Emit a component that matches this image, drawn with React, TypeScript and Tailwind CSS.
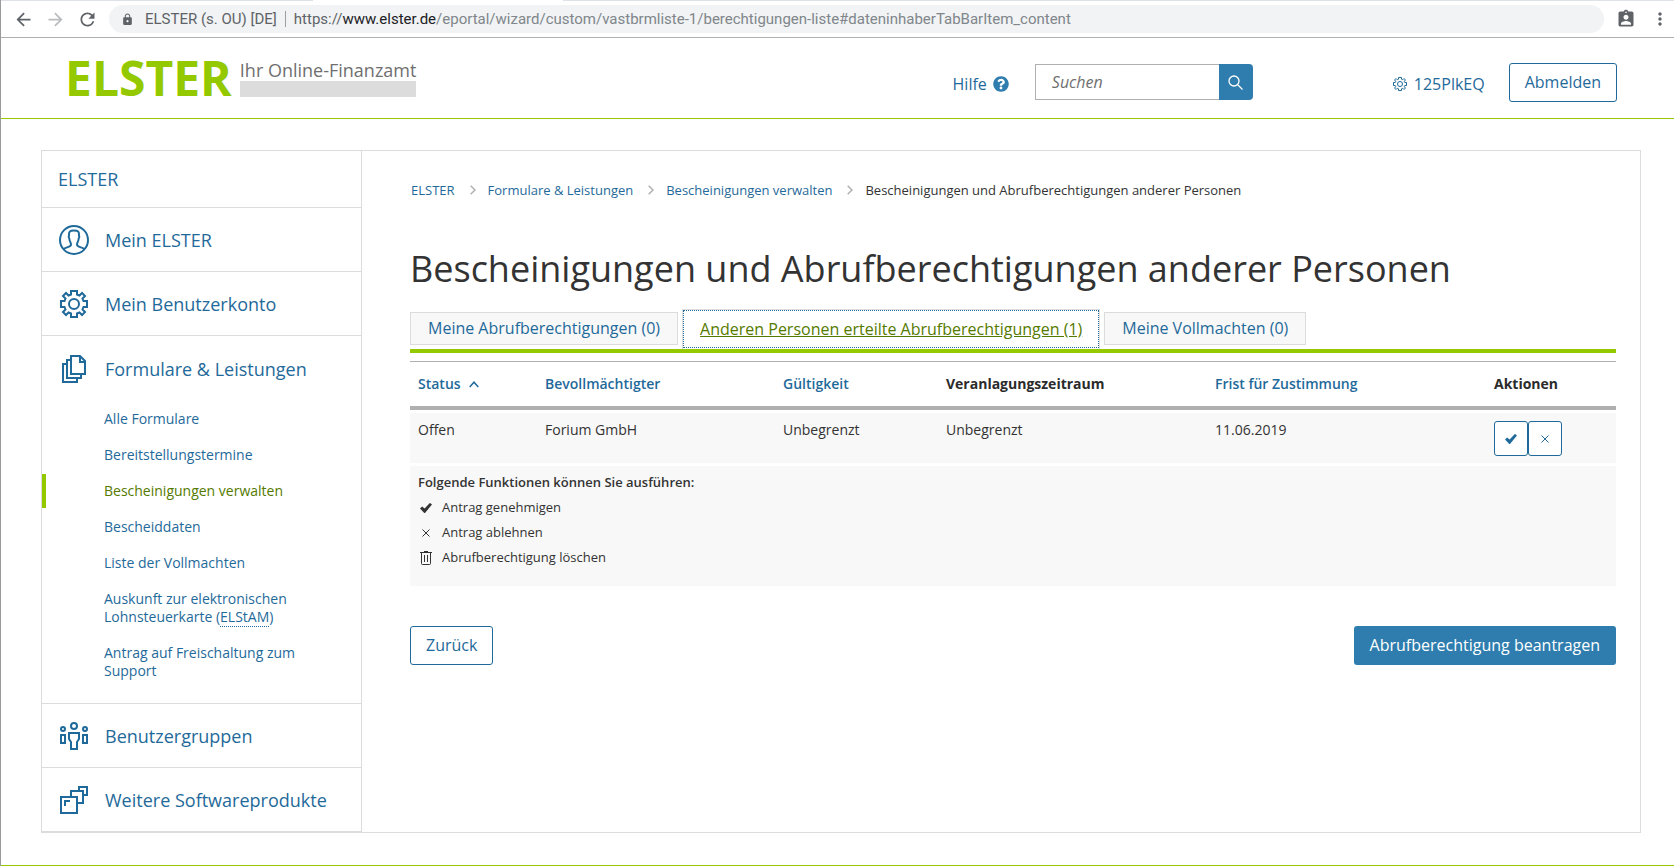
import type { ReactNode } from "react";
import { FaQuestionCircle } from "react-icons/fa";
import {
  MdArrowBack,
  MdArrowForward,
  MdAssignmentInd,
  MdLock,
  MdMoreVert,
  MdRefresh,
} from "react-icons/md";

function GearIcon({ className }: { className: string }) {
  return (
    <svg viewBox="0 0 28 28" className={className} fill="none" stroke="currentColor" strokeWidth="2" aria-hidden="true">
      <path d="M11 4.5V1h6v3.5l2.5 1L22 3l3 3-2.5 2.5 1 2.5H27v6h-3.5l-1 2.5L25 22l-3 3-2.500-2.500-2.500 1V27h-6v-3.500l-2.500-1L6 25l-3-3 2.500-2.500-1-2.500H1v-6h3.500l1-2.500L3 6l3-3 2.500 2.500z" />
      <circle cx="14" cy="14" r="5" />
    </svg>
  );
}

function UserIcon() {
  return (
    <svg viewBox="0 0 30 30" className="size-[30px]" fill="none" stroke="currentColor" strokeWidth="2" aria-hidden="true">
      <circle cx="15" cy="15" r="14" />
      <path d="M4.500 24c2-2 7.500-1.600 7.500-4.500 0-2-1.400-2.700-1.700-6-.9-1-.8-2-.3-3-.2-3.600.5-5 5-5s5.200 1.400 5 5c.5 1 .6 2-.3 3-.3 3.300-1.700 4-1.700 6 0 2.900 5.500 2.500 7.500 4.500" />
    </svg>
  );
}

function FilesIcon() {
  return (
    <svg viewBox="0 0 24 28" className="h-7 w-6" fill="none" stroke="currentColor" strokeWidth="2" aria-hidden="true">
      <path d="M9 1h9l5 5v13H9z" />
      <path d="M18 1v6h5" />
      <path d="M8 5H5v18h14v-3" />
      <path d="M4 9H1v18h14v-3" />
    </svg>
  );
}

function GroupIcon() {
  return (
    <svg viewBox="0 0 28 28" className="size-7" fill="none" stroke="currentColor" strokeWidth="2" aria-hidden="true">
      <circle cx="14" cy="4" r="3" />
      <circle cx="3" cy="7" r="2" />
      <circle cx="25" cy="7" r="2" />
      <path d="M1 13h4v8H1zM23 13h4v8h-4zM9 11h10v6l-2 3v7h-6v-7l-2-3z" />
    </svg>
  );
}

function SoftwareIcon() {
  return (
    <svg viewBox="0 0 28 28" className="size-7" fill="none" stroke="currentColor" strokeWidth="2" aria-hidden="true">
      <path d="M1 11h16v16H1z" />
      <path d="M5 20v-5h5" />
      <path d="M11 10V5h12v12h-5" />
      <path d="M19 4V1h8v8h-3" />
    </svg>
  );
}

function CheckIcon() {
  return (
    <svg viewBox="0 0 12 10" className="h-[10px] w-3" fill="currentColor" aria-hidden="true">
      <path d="M0 5.600L2.200 3.600 4.600 5.600 9.600.2Q10 0 10.400.2L12 1.600 5.200 9.700Q4.600 10.200 4 9.700z" />
    </svg>
  );
}

function CrossIcon() {
  return (
    <svg viewBox="0 0 8 8" className="size-2" fill="none" stroke="currentColor" aria-hidden="true">
      <path d="M.5.5l7 7M7.500.5l-7 7" />
    </svg>
  );
}

function TrashIcon() {
  return (
    <svg viewBox="0 0 12 14" className="h-[14px] w-3" fill="none" stroke="currentColor" aria-hidden="true">
      <path d="M0 1.500h12M4 .5h4M1.500 2v10.500q0 1 1 1h7q1 0 1-1V2M4.500 4v7M7.500 4v7" />
    </svg>
  );
}

function Separator() {
  return (
    <svg viewBox="0 0 6 10" className="mr-3 ml-[15px] h-[10px] w-[6px]" fill="none" stroke="#b0b0b0" strokeWidth="1.5" aria-hidden="true">
      <path d="M.7.7L5 5 .7 9.300" />
    </svg>
  );
}

const subItems: { label: ReactNode; active?: boolean }[] = [
  { label: "Alle Formulare" },
  { label: "Bereitstellungstermine" },
  { label: "Bescheinigungen verwalten", active: true },
  { label: "Bescheiddaten" },
  { label: "Liste der Vollmachten" },
  {
    label: (
      <>
        Auskunft zur elektronischen Lohnsteuerkarte (
        <abbr className="border-b border-dotted border-[#1f6a9a] no-underline">ELStAM</abbr>)
      </>
    ),
  },
  { label: "Antrag auf Freischaltung zum Support" },
];

function BrowserBar() {
  return (
    <div className="border-b border-[#b0b0b0]">
      <div className="flex h-px">
        <div className="w-[312px] bg-[#dee1e6]" />
        <div className="w-[250px]" />
        <div className="flex-1 bg-[#dee1e6]" />
      </div>
      <div className="flex h-9 items-center pr-1 pl-3 text-[#5f6368]">
        <button aria-label="Zurück" className="mr-[11px]"><MdArrowBack size={21} /></button>
        <button aria-label="Vorwärts" className="mr-[11px] text-[#babcbe]"><MdArrowForward size={21} /></button>
        <button aria-label="Neu laden" className="mr-[11px]"><MdRefresh size={21} /></button>
        <div className="flex h-7 flex-1 items-center rounded-full bg-[#f1f3f4] pl-3 font-[Roboto,sans-serif] text-[15px] whitespace-nowrap">
          <MdLock size={13} />
          <span className="ml-[11px]">ELSTER (s. OU) [DE]</span>
          <span className="mx-2 h-4 w-px bg-[#9aa0a6]" />
          <span className="text-[#80868b]">
            <span className="text-[#5f6368]">https://</span>
            <span className="text-[#202124]">www.elster.de</span>
            /eportal/wizard/custom/vastbrmliste-1/berechtigungen-liste#dateninhaberTabBarItem_content
          </span>
        </div>
        <button aria-label="Profil" className="ml-3"><MdAssignmentInd size={20} /></button>
        <button aria-label="Menü" className="ml-[14px]"><MdMoreVert size={20} /></button>
      </div>
    </div>
  );
}

function Header() {
  return (
    <header className="flex h-[81px] items-center border-b border-[#94c900] pt-2 pr-[57px] pl-16 text-base text-[#1f6a9a]">
      <a href="#" className="mt-2 flex items-start gap-2 self-start">
        <span className="text-5xl leading-[48px] font-bold text-[#94c900]">ELSTER</span>
        <span className="mt-[5px] flex flex-col text-lg leading-[22px] text-[#6f6f6f]">
          Ihr Online-Finanzamt
          <span className="h-4 bg-[#dcdcdc]" />
        </span>
      </a>
      <a href="#" className="ml-auto flex items-center gap-[6px] pt-1">
        Hilfe <FaQuestionCircle size={16} color="#2e7dae" />
      </a>
      <form className="ml-[26px] flex h-9">
        <input
          type="search"
          aria-label="Suchen"
          placeholder="Suchen"
          className="w-[184px] border border-r-0 border-[#b0b0b0] px-4 italic outline-none placeholder:text-[#6f6f6f]"
        />
        <button type="button" aria-label="Suche starten" className="flex w-[34px] items-center justify-center rounded-r bg-[#2e7dae] text-white">
          <svg viewBox="0 0 15 15" className="size-[15px]" fill="none" stroke="currentColor" strokeWidth="1.300" aria-hidden="true">
            <circle cx="6" cy="6" r="5" />
            <path d="M9.500 9.500l5 5" />
          </svg>
        </button>
      </form>
      <a href="#" className="ml-[140px] flex items-center gap-[7px] pt-1">
        <GearIcon className="size-[14px]" /> 125PlkEQ
      </a>
      <button className="ml-6 h-[39px] rounded-[3px] border border-[#1f6a9a] px-[15px]">Abmelden</button>
    </header>
  );
}

function NavLink({ icon, children }: { icon: ReactNode; children: ReactNode }) {
  return (
    <a href="#" className="flex h-[63px] items-center gap-[15px] pl-4 text-lg">
      <span className="flex w-8 justify-center">{icon}</span>
      {children}
    </a>
  );
}

function Sidebar() {
  return (
    <nav className="w-[320px] shrink-0 border-r border-[#dcdcdc] text-[#1f6a9a]">
      <ul>
        <li className="border-b border-[#dcdcdc]">
          <a href="#" className="flex h-14 items-center pl-4 text-lg">ELSTER</a>
        </li>
        <li className="border-b border-[#dcdcdc]"><NavLink icon={<UserIcon />}>Mein ELSTER</NavLink></li>
        <li className="border-b border-[#dcdcdc]"><NavLink icon={<GearIcon className="size-7" />}>Mein Benutzerkonto</NavLink></li>
        <li className="border-b border-[#dcdcdc] pt-px pb-[15px]">
          <NavLink icon={<FilesIcon />}>Formulare &amp; Leistungen</NavLink>
          <ul className="mt-[2px] flex flex-col gap-[2px] text-sm leading-[18px]">
            {subItems.map((item, i) => (
              <li key={i}>
                <a
                  href="#"
                  className={
                    item.active
                      ? "block border-l-4 border-[#94c900] py-2 pr-[50px] pl-[58px] text-[#557a00]"
                      : "block py-2 pr-[50px] pl-[62px]"
                  }
                >
                  {item.label}
                </a>
              </li>
            ))}
          </ul>
        </li>
        <li className="border-b border-[#dcdcdc]"><NavLink icon={<GroupIcon />}>Benutzergruppen</NavLink></li>
        <li className="border-b border-[#dcdcdc]"><NavLink icon={<SoftwareIcon />}>Weitere Softwareprodukte</NavLink></li>
      </ul>
    </nav>
  );
}

function PermissionTable() {
  return (
    <table className="mt-2 w-full table-fixed border-separate border-spacing-0 text-left text-sm">
      <colgroup>
        <col className="w-[127px]" />
        <col className="w-[238px]" />
        <col className="w-[163px]" />
        <col className="w-[269px]" />
        <col className="w-[279px]" />
        <col className="w-[130px]" />
      </colgroup>
      <thead>
        <tr className="text-[#1f6a9a] *:border-t *:border-b-4 *:border-[#b0b0b0] *:px-2 *:py-3">
          <th className="font-semibold">
            <a href="#" className="flex items-center gap-2">
              Status
              <svg viewBox="0 0 10 7" className="h-[7px] w-[10px]" fill="none" stroke="currentColor" strokeWidth="1.500" aria-hidden="true">
                <path d="M.7 6L5 1.200 9.300 6" />
              </svg>
            </a>
          </th>
          <th className="font-semibold"><a href="#">Bevollmächtigter</a></th>
          <th className="font-semibold"><a href="#">Gültigkeit</a></th>
          <th className="font-bold text-[#2b2b2b]">Veranlagungszeitraum</th>
          <th className="font-semibold"><a href="#">Frist für Zustimmung</a></th>
          <th className="font-bold text-[#2b2b2b]">Aktionen</th>
        </tr>
      </thead>
      <tbody>
        <tr className="align-top leading-[18px] *:border-t-[3px] *:border-white *:bg-[#f8f8f8] *:bg-clip-padding *:px-2 *:pt-2 *:pb-[7px]">
          <td>Offen</td>
          <td>Forium GmbH</td>
          <td>Unbegrenzt</td>
          <td>Unbegrenzt</td>
          <td>11.06.2019</td>
          <td>
            <div className="flex text-[#1f6a9a]">
              <button aria-label="Antrag genehmigen" className="flex h-[35px] w-[34px] items-center justify-center rounded-[3px] border border-[#1f6a9a] bg-white">
                <CheckIcon />
              </button>
              <button aria-label="Antrag ablehnen" className="flex h-[35px] w-[34px] items-center justify-center rounded-[3px] border border-[#1f6a9a] bg-white">
                <CrossIcon />
              </button>
            </div>
          </td>
        </tr>
      </tbody>
    </table>
  );
}

function Legend() {
  return (
    <section className="mt-[3px] bg-[#f8f8f8] px-2 pt-1 pb-4 text-[13px] leading-[25px]">
      <h2 className="font-semibold">Folgende Funktionen können Sie ausführen:</h2>
      <ul>
        <li className="flex items-center gap-2">
          <span className="flex w-4 justify-center"><CheckIcon /></span>Antrag genehmigen
        </li>
        <li className="flex items-center gap-2">
          <span className="flex w-4 justify-center"><CrossIcon /></span>Antrag ablehnen
        </li>
        <li className="flex items-center gap-2">
          <span className="flex w-4 justify-center"><TrashIcon /></span>Abrufberechtigung löschen
        </li>
      </ul>
    </section>
  );
}

export default function App() {
  return (
    <div className="min-h-screen border-l border-[#9a9a9a] bg-white font-['Open_Sans',sans-serif] text-[#333]">
      <BrowserBar />
      <Header />
      <div className="mt-[31px] mr-[33px] ml-10 flex border border-[#dcdcdc]">
        <Sidebar />
        <main className="min-w-0 flex-1 pt-[29px] pr-6 pl-12">
          <nav aria-label="Brotkrumen" className="flex items-center pl-px text-[13px] leading-5 text-[#1f6a9a]">
            <a href="#">ELSTER</a>
            <Separator />
            <a href="#">Formulare &amp; Leistungen</a>
            <Separator />
            <a href="#">Bescheinigungen verwalten</a>
            <Separator />
            <span className="text-[#333]">Bescheinigungen und Abrufberechtigungen anderer Personen</span>
          </nav>

          <h1 className="mt-[45px] text-4xl leading-[48px]">Bescheinigungen und Abrufberechtigungen anderer Personen</h1>

          <div role="tablist" className="mt-4 flex items-start gap-1 border-b-4 border-[#94c900] text-base text-[#1f6a9a]">
            <button role="tab" className="mt-[3px] h-[33px] border border-[#dcdcdc] bg-[#f8f8f8] px-[17px] pb-[2px]">
              Meine Abrufberechtigungen (0)
            </button>
            <button
              role="tab"
              aria-selected="true"
              className="h-10 border border-b-0 border-[#dcdcdc] px-[17px] pb-[2px] text-[#557a00] underline outline-1 -outline-offset-2 outline-[#1f6a9a] outline-dotted"
            >
              Anderen Personen erteilte Abrufberechtigungen (1)
            </button>
            <button role="tab" className="mt-[3px] h-[33px] border border-[#dcdcdc] bg-[#f8f8f8] px-[17px] pb-[2px]">
              Meine Vollmachten (0)
            </button>
          </div>

          <PermissionTable />
          <Legend />

          <div className="mt-10 flex justify-between text-base">
            <button className="h-[39px] rounded-[3px] border border-[#1f6a9a] px-[15px] pb-[2px] text-[#1f6a9a]">Zurück</button>
            <button className="h-[39px] rounded-[3px] bg-[#2e7dae] px-4 pb-[2px] font-medium text-white">Abrufberechtigung beantragen</button>
          </div>
        </main>
      </div>
      <footer className="mt-8 border-t border-[#94c900]" />
    </div>
  );
}
